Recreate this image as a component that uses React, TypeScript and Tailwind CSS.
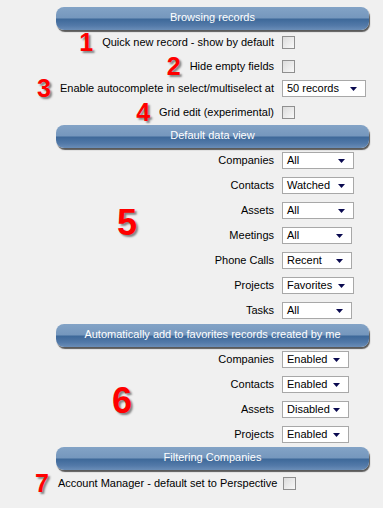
import React from "react";

const Header = ({ title }: { title: string }) => (
  <div className="ml-[56px] w-[313px] h-[23px] rounded-[8px] bg-[linear-gradient(to_bottom,#83a3c6_0%,#7597bd_48%,#3d6899_52%,#5279a8_80%,#6a8db7_100%)] shadow-[1px_2px_1px_rgba(40,40,40,0.75)] flex items-center justify-center text-white text-[11px] leading-none pb-[3px]">
    {title}
  </div>
);

const Num = ({ n, big }: { n: string; big?: boolean }) => (
  <span
    className={`font-bold text-[#ff0000] leading-none [font-family:'Liberation_Sans',Arial,sans-serif] [text-shadow:2px_2px_2px_rgba(0,0,0,0.45)] ${
      big ? "text-[36px]" : "text-[25px]"
    }`}
  >
    {n}
  </span>
);

const Checkbox = () => (
  <div className="w-[13px] h-[13px] border border-[#8f8f8f] bg-[linear-gradient(135deg,#dcdcdc,#f8f8f8)]" />
);

const Select = ({ value, w }: { value: string; w: string }) => (
  <div
    className={`${w} h-[17px] border border-[#a8a8a8] bg-white flex items-center justify-between pl-[4px] pr-[8px] text-[11px] text-black`}
  >
    <span>{value}</span>
    <svg width="7" height="4" viewBox="0 0 7 4">
      <path d="M0 0h7L3.5 4z" fill="#0a0a50" />
    </svg>
  </div>
);

const Row = ({
  h,
  num,
  label,
  children,
}: {
  h: string;
  num?: string;
  label: string;
  children: React.ReactNode;
}) => (
  <div className={`${h} flex items-center`}>
    <div className="w-[274px] flex items-center justify-end gap-[9px]">
      {num && <Num n={num} />}
      <span className="text-[11px] text-black whitespace-nowrap">{label}</span>
    </div>
    <div className="ml-[8px] flex items-center">{children}</div>
  </div>
);

const dataView = [
  ["Companies", "All", "w-[72px]"],
  ["Contacts", "Watched", "w-[72px]"],
  ["Assets", "All", "w-[72px]"],
  ["Meetings", "All", "w-[70px]"],
  ["Phone Calls", "Recent", "w-[70px]"],
  ["Projects", "Favorites", "w-[72px]"],
  ["Tasks", "All", "w-[70px]"],
];

const favorites = [
  ["Companies", "Enabled"],
  ["Contacts", "Enabled"],
  ["Assets", "Disabled"],
  ["Projects", "Enabled"],
];

export default function App() {
  return (
    <div className="w-[383px] h-[508px] bg-[#f0f0f0] pt-[7px] text-[11px] [font-family:'Liberation_Sans',Arial,sans-serif] overflow-hidden">
      <Header title="Browsing records" />
      <Row h="h-[25px]" num="1" label="Quick new record - show by default">
        <Checkbox />
      </Row>
      <Row h="h-[22px]" num="2" label="Hide empty fields">
        <Checkbox />
      </Row>
      <Row h="h-[23px]" num="3" label="Enable autocomplete in select/multiselect at">
        <Select value="50 records" w="w-[84px]" />
      </Row>
      <Row h="h-[25px]" num="4" label="Grid edit (experimental)">
        <Checkbox />
      </Row>

      <Header title="Default data view" />
      <div className="relative">
        <div className="absolute left-[117px] top-[57px]">
          <Num n="5" big />
        </div>
        {dataView.map(([label, value, w]) => (
          <Row key={label} h="h-[25px]" label={label}>
            <Select value={value} w={w} />
          </Row>
        ))}
      </div>

      <div className="h-[1px]" />
      <Header title="Automatically add to favorites records created by me" />
      <div className="relative">
        <div className="absolute left-[112px] top-[36px]">
          <Num n="6" big />
        </div>
        {favorites.map(([label, value]) => (
          <Row key={label} h="h-[25px]" label={label}>
            <Select value={value} w="w-[67px]" />
          </Row>
        ))}
      </div>

      <Header title="Filtering Companies" />
      <div className="h-[26px] flex items-center">
        <div className="w-[274px] flex items-center gap-[9px] pl-[35px]">
          <Num n="7" />
          <span className="text-[11px] text-black whitespace-nowrap">
            Account Manager - default set to Perspective
          </span>
        </div>
        <div className="ml-[9px]">
          <Checkbox />
        </div>
      </div>
    </div>
  );
}
